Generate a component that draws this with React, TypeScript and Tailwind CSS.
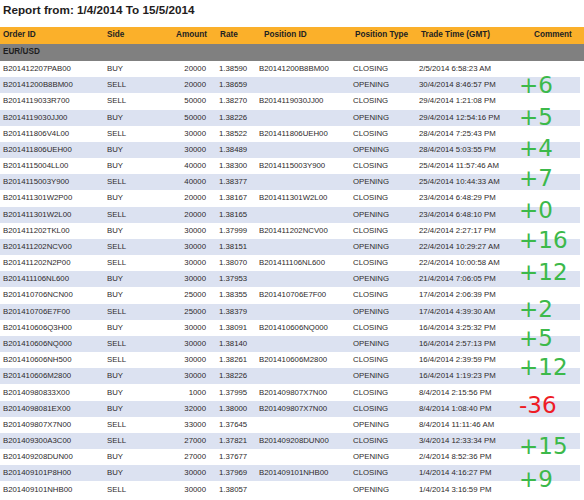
const rows: string[][] = [
  ['B201412207PAB00', 'BUY', '20000', '1.38590', 'B20141200B8BM00', 'CLOSING', '2/5/2014 6:58:23 AM'],
  ['B20141200B8BM00', 'SELL', '20000', '1.38659', '', 'OPENING', '30/4/2014 8:46:57 PM'],
  ['B2014119033R700', 'SELL', '50000', '1.38270', 'B2014119030JJ00', 'CLOSING', '29/4/2014 1:21:08 PM'],
  ['B2014119030JJ00', 'BUY', '50000', '1.38226', '', 'OPENING', '29/4/2014 12:54:16 PM'],
  ['B201411806V4L00', 'SELL', '30000', '1.38522', 'B201411806UEH00', 'CLOSING', '28/4/2014 7:25:43 PM'],
  ['B201411806UEH00', 'BUY', '30000', '1.38489', '', 'OPENING', '28/4/2014 5:03:55 PM'],
  ['B2014115004LL00', 'BUY', '40000', '1.38300', 'B2014115003Y900', 'CLOSING', '25/4/2014 11:57:46 AM'],
  ['B2014115003Y900', 'SELL', '40000', '1.38377', '', 'OPENING', '25/4/2014 10:44:33 AM'],
  ['B201411301W2P00', 'BUY', '20000', '1.38167', 'B201411301W2L00', 'CLOSING', '23/4/2014 6:48:29 PM'],
  ['B201411301W2L00', 'SELL', '20000', '1.38165', '', 'OPENING', '23/4/2014 6:48:10 PM'],
  ['B201411202TKL00', 'BUY', '30000', '1.37999', 'B201411202NCV00', 'CLOSING', '22/4/2014 2:27:17 PM'],
  ['B201411202NCV00', 'SELL', '30000', '1.38151', '', 'OPENING', '22/4/2014 10:29:27 AM'],
  ['B201411202N2P00', 'SELL', '30000', '1.38070', 'B201411106NL600', 'CLOSING', '22/4/2014 10:00:58 AM'],
  ['B201411106NL600', 'BUY', '30000', '1.37953', '', 'OPENING', '21/4/2014 7:06:05 PM'],
  ['B201410706NCN00', 'BUY', '25000', '1.38355', 'B201410706E7F00', 'CLOSING', '17/4/2014 2:06:39 PM'],
  ['B201410706E7F00', 'SELL', '25000', '1.38379', '', 'OPENING', '17/4/2014 4:39:30 AM'],
  ['B201410606Q3H00', 'BUY', '30000', '1.38091', 'B201410606NQ000', 'CLOSING', '16/4/2014 3:25:32 PM'],
  ['B201410606NQ000', 'SELL', '30000', '1.38140', '', 'OPENING', '16/4/2014 2:57:13 PM'],
  ['B201410606NH500', 'SELL', '30000', '1.38261', 'B201410606M2800', 'CLOSING', '16/4/2014 2:39:59 PM'],
  ['B201410606M2800', 'BUY', '30000', '1.38226', '', 'OPENING', '16/4/2014 1:19:23 PM'],
  ['B20140980833X00', 'BUY', '1000', '1.37995', 'B201409807X7N00', 'CLOSING', '8/4/2014 2:15:56 PM'],
  ['B2014098081EX00', 'BUY', '32000', '1.38000', 'B201409807X7N00', 'CLOSING', '8/4/2014 1:08:40 PM'],
  ['B201409807X7N00', 'SELL', '33000', '1.37645', '', 'OPENING', '8/4/2014 11:11:46 AM'],
  ['B201409300A3C00', 'SELL', '27000', '1.37821', 'B201409208DUN00', 'CLOSING', '3/4/2014 12:33:34 PM'],
  ['B201409208DUN00', 'BUY', '27000', '1.37677', '', 'OPENING', '2/4/2014 8:52:36 PM'],
  ['B201409101P8H00', 'BUY', '30000', '1.37969', 'B201409101NHB00', 'CLOSING', '1/4/2014 4:16:27 PM'],
  ['B201409101NHB00', 'SELL', '30000', '1.38057', '', 'OPENING', '1/4/2014 3:16:59 PM'],
];

// hand-written P/L notes, keyed by the first row of each trade
const notes: Record<number, { text: string; top: number; loss?: boolean }> = {
  0: { text: '+6', top: 13 },
  2: { text: '+5', top: 12.6 },
  4: { text: '+4', top: 11.3 },
  6: { text: '+7', top: 8.9 },
  8: { text: '+0', top: 8.6 },
  10: { text: '+16', top: 6.2 },
  12: { text: '+12', top: 5.8 },
  14: { text: '+2', top: 10.5 },
  16: { text: '+5', top: 7.1 },
  18: { text: '+12', top: 3.8 },
  20: { text: '-36', top: 9.9, loss: true },
  23: { text: '+15', top: 1.9 },
  25: { text: '+9', top: 3 },
};

export default function App() {
  return (
    <div className="w-[584px] h-[500px] overflow-hidden bg-white font-[family-name:'Liberation_Sans',Arial,sans-serif]">
      <div className="h-[27px] pt-[2px] pl-[3px] text-[11.7px] leading-[15px] font-bold text-[#231c1c]">
        Report from: 1/4/2014 To 15/5/2014
      </div>

      <div className="flex h-[17px] bg-[#fbb02a] pl-[3px] text-[8.2px] leading-[15px] font-bold text-[#222]">
        <div className="w-[104px]">Order ID</div>
        <div className="w-[53px]">Side</div>
        <div className="w-[47px] text-right">Amount</div>
        <div className="w-[52px] pl-[13px]">Rate</div>
        <div className="w-[94px] pl-[5px]">Position ID</div>
        <div className="w-[66px] pl-[2px]">Position Type</div>
        <div className="w-[102px] pl-[2px]">Trade Time (GMT)</div>
        <div className="pl-[13px]">Comment</div>
      </div>

      <div className="h-[17px] bg-[#808080] pl-[3px] text-[8.2px] leading-[15px] font-bold text-[#1e1e1e]">
        EUR/USD
      </div>

      <div>
        {rows.map((r, i) => {
          const note = notes[i];
          return (
            <div
              key={i}
              className={`flex h-[16.18px] w-[580px] items-center pl-[3px] text-[7.8px] leading-[10px] text-[#2e2a2a] ${
                i % 2 === 1 ? 'bg-[#dce2f1]' : 'bg-white'
              }`}
            >
              <div className="w-[104px]">{r[0]}</div>
              <div className="w-[53px]">{r[1]}</div>
              <div className="w-[46px] text-right">{r[2]}</div>
              <div className="w-[53px] pl-[13px]">{r[3]}</div>
              <div className="w-[94px]">{r[4]}</div>
              <div className="w-[66px]">{r[5]}</div>
              <div className="w-[102px]">{r[6]}</div>
              <div className="relative flex-1 self-stretch">
                {note && (
                  <span
                    className={`absolute left-[-2px] whitespace-nowrap font-[family-name:'DejaVu_Sans',sans-serif] text-[23px] leading-[23px] ${
                      note.loss ? 'text-[#ee1c25]' : 'text-[#3cb94a]'
                    }`}
                    style={{ top: note.top }}
                  >
                    {note.text}
                  </span>
                )}
              </div>
            </div>
          );
        })}
      </div>
    </div>
  );
}
